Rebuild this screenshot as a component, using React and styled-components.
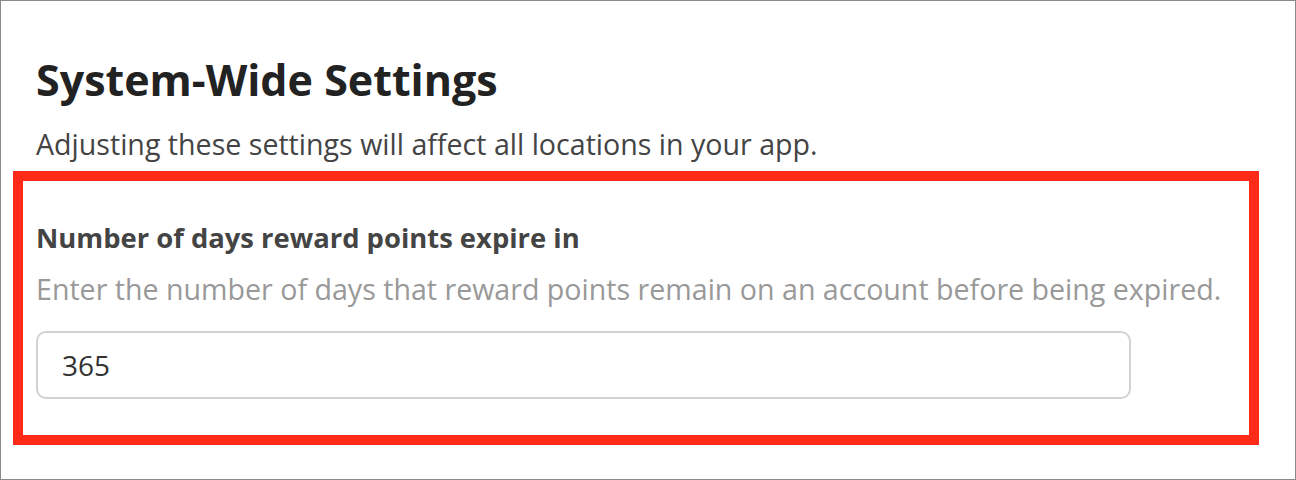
import styled, { createGlobalStyle } from "styled-components";

const GlobalStyle = createGlobalStyle`
  html, body {
    margin: 0;
    padding: 0;
    background: #ffffff;
  }
  * {
    box-sizing: border-box;
  }
`;

const Frame = styled.div`
  width: 1296px;
  height: 480px;
  border: 1px solid #8a8a8a;
  background: #fff;
  padding: 54px 36px 0 12px;
  font-family: "Open Sans", "Noto Sans", sans-serif;
  overflow: hidden;
`;

const Intro = styled.div`
  padding-left: 23px;
`;

const Title = styled.h1`
  margin: 0;
  font-size: 43px;
  line-height: 50px;
  font-weight: 700;
  color: #222222;
`;

const Subtitle = styled.p`
  margin: 21px 0 0;
  font-size: 28.6px;
  line-height: 36px;
  color: #444444;
`;

const Highlight = styled.section`
  margin-top: 9px;
  border: 10px solid #ff2a18;
  padding: 36px 13px 36px;
`;

const Label = styled.label`
  display: block;
  font-size: 27.4px;
  line-height: 42px;
  font-weight: 700;
  color: #444444;
`;

const Hint = styled.p`
  margin: 9px 0 0;
  font-size: 28.6px;
  line-height: 42px;
  color: #999999;
`;

const Field = styled.input`
  display: block;
  margin-top: 21px;
  width: 1095px;
  height: 68px;
  padding: 0 24px;
  border: 2px solid #d2d2d2;
  border-radius: 10px;
  font-family: inherit;
  font-size: 28px;
  color: #333333;
  background: #fff;
  outline: none;
`;

export default function App() {
  return (
    <>
      <GlobalStyle />
      <Frame>
        <Intro>
          <Title>System-Wide Settings</Title>
          <Subtitle>Adjusting these settings will affect all locations in your app.</Subtitle>
        </Intro>
        <Highlight>
          <Label htmlFor="expire-days">Number of days reward points expire in</Label>
          <Hint>Enter the number of days that reward points remain on an account before being expired.</Hint>
          <Field id="expire-days" type="text" defaultValue="365" />
        </Highlight>
      </Frame>
    </>
  );
}
